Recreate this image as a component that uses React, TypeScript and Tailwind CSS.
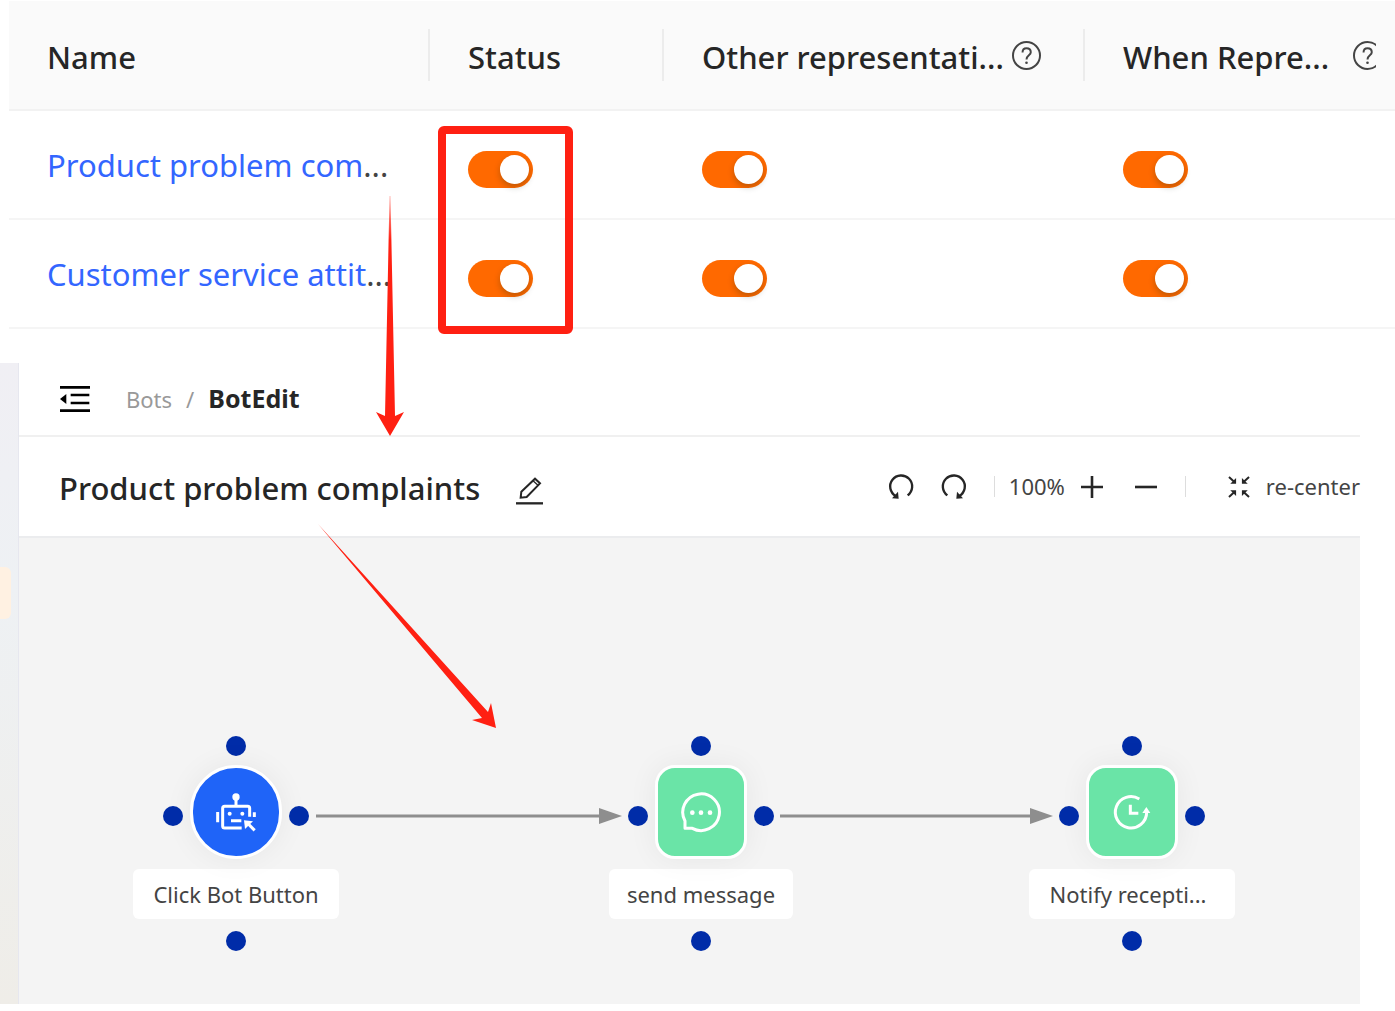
import React from 'react';

const columns = [
  { title: 'Name', width: 'w-[421px]', gap: '', help: false },
  { title: 'Status', width: 'w-[234px]', gap: '', help: false },
  { title: 'Other representati...', width: 'w-[421px]', gap: 'gap-2', help: true },
  { title: 'When Repre...', width: '', gap: 'gap-6', help: true },
];

const rows = ['Product problem com', 'Customer service attit'];

const nodes = [
  { label: 'Click Bot Button', place: 'left-[114px]', shape: 'rounded-full bg-[#1f64f8]', pad: 'px-5', Icon: RobotIcon },
  { label: 'send message', place: 'left-[579px]', shape: 'rounded-[20px] bg-[#6ae4a7]', pad: 'px-[18px]', Icon: ChatIcon },
  { label: 'Notify recepti...', place: 'left-[1010px]', shape: 'rounded-[20px] bg-[#6ae4a7]', pad: 'pl-5 pr-7', Icon: ClockIcon },
];

function HelpIcon() {
  return (
    <svg viewBox="0 0 88 88" className="w-[29px] h-[29px] mb-1 shrink-0" fill="none" stroke="#444" strokeWidth="6">
      <circle cx="44" cy="44" r="41" />
      <path d="M32 35c0-8 5-13 12-13s13 4 13 12c0 10-13 9-13 22" />
      <circle cx="44" cy="66" r="4" fill="#444" stroke="none" />
    </svg>
  );
}

function MenuFoldIcon() {
  return (
    <svg viewBox="0 0 90 84" className="w-[30px] h-[28px]" stroke="#000" strokeWidth="8">
      <path d="M0 7h90M32 30h56M32 54h56M0 77h90" />
      <path d="M0 42l19-15v30z" fill="#000" stroke="none" />
    </svg>
  );
}

function EditIcon() {
  return (
    <svg viewBox="0 0 81 84" className="w-[27px] h-[28px]" fill="none" stroke="#262626" strokeWidth="6">
      <path d="M0 79h81" strokeWidth="7" />
      <path d="M14 62l2-18L57 5l15 14-40 41z" />
      <path d="M51 11l15 14" strokeWidth="4" />
    </svg>
  );
}

function RotateIcon({ flip = false }: { flip?: boolean }) {
  return (
    <svg
      viewBox="0 0 78 78"
      className={flip ? 'w-[26px] h-[26px] -scale-x-100' : 'w-[26px] h-[26px]'}
      fill="none"
      stroke="#262626"
      strokeWidth="7"
    >
      <path d="M59 64A33 33 0 1 0 23 66" />
      <path d="M12 73l20 1-2-21z" fill="#262626" stroke="none" />
    </svg>
  );
}

function ReCenterIcon() {
  return (
    <svg viewBox="0 0 66 68" className="w-[22px] h-[22px]" fill="#262626" stroke="#262626" strokeWidth="6">
      <path d="M2 3l16 15M64 3L48 18M2 65l16-15M64 65L48 50" />
      <path d="M24 24H6L24 6zM42 24h18L42 6zM24 44H6l18 18zM42 44h18L42 62z" stroke="none" />
    </svg>
  );
}

function RobotIcon() {
  return (
    <svg viewBox="0 0 132 132" className="w-[44px] h-[44px]" fill="none" stroke="#fff" strokeWidth="9">
      <circle cx="66" cy="21" r="11" fill="#fff" stroke="none" />
      <path d="M66 28v20" />
      <path d="M107 80V55a6 6 0 0 0-6-6H32a6 6 0 0 0-6 6v53a6 6 0 0 0 6 6h51" />
      <path d="M11 66v31M121 67v14M51 92h31" />
      <circle cx="47" cy="71" r="6" fill="#fff" stroke="none" />
      <circle cx="85" cy="71" r="6" fill="#fff" stroke="none" />
      <path d="M90 91l27 3-24 23z" fill="#fff" stroke="none" />
      <path d="M100 99l22 22" />
    </svg>
  );
}

function ChatIcon() {
  return (
    <svg viewBox="0 0 132 132" className="w-[44px] h-[44px]" fill="none" stroke="#fff" strokeWidth="9">
      <path d="M18 115V93A55 55 0 1 1 40 115z" strokeLinejoin="round" />
      <g fill="#fff" stroke="none">
        <circle cx="40" cy="68" r="7" />
        <circle cx="66" cy="68" r="7" />
        <circle cx="93" cy="68" r="7" />
      </g>
    </svg>
  );
}

function ClockIcon() {
  return (
    <svg viewBox="0 0 132 132" className="w-[44px] h-[44px]" fill="none" stroke="#fff" strokeWidth="9">
      <path d="M88 27A47 47 0 1 0 110 67" />
      <path d="M61 44v26h24" />
      <path d="M109 51l12 18H97z" fill="#fff" stroke="none" />
    </svg>
  );
}

function Switch({ label }: { label: string }) {
  return (
    <input
      type="checkbox"
      role="switch"
      aria-label={label}
      defaultChecked
      className="block appearance-none w-[65px] h-[37px] mt-[10px] p-1 rounded-full bg-gray-300 checked:bg-[#ff6900] cursor-pointer before:block before:w-[29px] before:h-[29px] before:rounded-full before:bg-white before:shadow-[0_3px_6px_rgba(0,35,11,0.25)] checked:before:translate-x-7"
    />
  );
}

function RuleTable() {
  return (
    <div className="ml-[9px] pt-px overflow-hidden">
      <table className="w-full table-fixed border-collapse text-left">
        <thead>
          <tr className="h-[109px] bg-[#fafafa] border-b-2 border-[#f2f2f2]">
            {columns.map((col, i) => (
              <th key={col.title} className={`${col.width} p-0 font-medium text-[#262626]`}>
                <div className="flex items-center h-[52px]">
                  <div className={`flex flex-1 items-center min-w-0 pt-1 pl-[38px] mr-[19px] overflow-hidden ${col.gap}`}>
                    <span className="text-[31px] leading-[48px] whitespace-nowrap">{col.title}</span>
                    {col.help && <HelpIcon />}
                  </div>
                  {i < columns.length - 1 && <div className="w-[2px] h-full bg-[#ececec]"></div>}
                </div>
              </th>
            ))}
          </tr>
        </thead>
        <tbody>
          {rows.map((name) => (
            <tr key={name} className="h-[109px] border-b-2 border-[#f5f5f5]">
              <td className="py-0 pl-[38px] pr-0 text-[31px] leading-[48px] whitespace-nowrap text-[#444]">
                <a href="#bot-edit" className="text-[#3366ff] hover:underline">{name}</a>...
              </td>
              {columns.slice(1).map((col) => (
                <td key={col.title} className="py-0 pl-[38px] pr-0">
                  <Switch label={`${name} ${col.title}`} />
                </td>
              ))}
            </tr>
          ))}
        </tbody>
      </table>
    </div>
  );
}

function FlowNode({ node }: { node: (typeof nodes)[number] }) {
  const dot = 'w-5 h-5 rounded-full bg-[#002ca8]';
  return (
    <div className={`absolute top-[198px] w-[206px] flex flex-col items-center ${node.place}`}>
      <span className={dot}></span>
      <div className="relative mt-[9px]">
        <div className={`w-[92px] h-[94px] border-[3px] border-white flex items-center justify-center shadow-[0_0_30px_rgba(0,0,0,0.06)] ${node.shape}`}>
          <node.Icon />
        </div>
        <span className={`absolute top-[41px] -left-[27px] ${dot}`}></span>
        <span className={`absolute top-[41px] -right-[27px] ${dot}`}></span>
      </div>
      <div className={`mt-[10px] h-[50px] rounded-md bg-white text-[22px] leading-[50px] whitespace-nowrap text-[#444] ${node.pad}`}>
        {node.label}
      </div>
      <span className={`mt-3 ${dot}`}></span>
    </div>
  );
}

function BotEditor() {
  return (
    <main id="bot-edit" className="flex-1 min-w-0">
      <nav className="flex items-center h-[74px] pl-[41px] border-b-2 border-[#f0f0f0]">
        <button aria-label="Collapse menu" className="cursor-pointer"><MenuFoldIcon /></button>
        <a href="#bots" className="ml-9 text-[22px] text-[#999]">Bots</a>
        <span className="mx-[14px] text-[22px] text-[#999]">/</span>
        <span className="text-[25px] font-bold text-[#262626]">BotEdit</span>
      </nav>

      <header className="flex items-center h-[101px] pl-10 border-b-2 border-[#ebecee]">
        <div className="flex items-center pt-1">
          <h1 className="text-[31px] font-medium text-[#262626] whitespace-nowrap">Product problem complaints</h1>
          <button aria-label="Rename" className="ml-9 mt-1 cursor-pointer"><EditIcon /></button>
        </div>

        <div className="ml-auto flex items-center text-[22px] text-[#444]">
          <button aria-label="Undo"><RotateIcon /></button>
          <button aria-label="Redo" className="ml-[27px]"><RotateIcon flip /></button>
          <div className="ml-[27px] mr-[14px] w-px h-[21px] bg-[#ddd]"></div>
          <span>100%</span>
          <button aria-label="Zoom in" className="ml-4">
            <svg viewBox="0 0 22 22" className="w-[22px] h-[22px]" stroke="#262626" strokeWidth="2.6"><path d="M0 11h22M11 0v22" /></svg>
          </button>
          <button aria-label="Zoom out" className="ml-8">
            <svg viewBox="0 0 22 22" className="w-[22px] h-[22px]" stroke="#262626" strokeWidth="2.6"><path d="M0 11h22" /></svg>
          </button>
          <div className="ml-7 mr-[42px] w-px h-[21px] bg-[#ddd]"></div>
          <button className="flex items-center gap-4 whitespace-nowrap">
            <ReCenterIcon />
            re-center
          </button>
        </div>
      </header>

      <section className="relative h-[466px] bg-[#f4f4f4] overflow-hidden">
        <svg className="absolute left-0 top-0 w-[1341px] h-full" stroke="#8e8e8e" strokeWidth="3">
          <path d="M297 278h285M761 278h252" />
          <path d="M580 270l23 8-23 8zM1011 270l23 8-23 8z" fill="#8e8e8e" stroke="none" />
        </svg>
        {nodes.map((node) => (
          <FlowNode key={node.label} node={node} />
        ))}
      </section>
    </main>
  );
}

// Red marks drawn over the two panels
function Annotations() {
  return (
    <>
      <div className="absolute left-[438px] top-[126px] w-[135px] h-[208px] border-8 border-[#ff2012] rounded-md pointer-events-none"></div>
      <svg className="absolute left-0 top-0 w-[600px] h-[740px] pointer-events-none" aria-hidden="true">
        <defs>
          <linearGradient id="down" gradientUnits="userSpaceOnUse" x1="390" y1="196" x2="390" y2="240">
            <stop offset="0" stopColor="#ff2012" stopOpacity="0.3" />
            <stop offset="1" stopColor="#ff2012" />
          </linearGradient>
        </defs>
        <path d="M389.500 196h1L395 416l9-4-14 24-14-24 9 4z" fill="url(#down)" />
        <path d="M318 524L488 712l3-9 5 25-24-8 10-2z" fill="#ff2012" />
      </svg>
    </>
  );
}

export default function App() {
  return (
    <div className="relative bg-white font-['Noto_Sans',sans-serif]">
      <RuleTable />
      <div className="flex mt-[34px] mr-[35px]">
        <aside className="w-[19px] shrink-0 pt-[204px] border-r border-[#e6e7ef] bg-linear-to-b from-[#f0eff4] via-[#eef1f4] via-35% to-[#efede8]">
          <div className="w-[11px] h-[52px] rounded-r-md bg-[#fff1e2]"></div>
        </aside>
        <BotEditor />
      </div>
      <Annotations />
    </div>
  );
}
